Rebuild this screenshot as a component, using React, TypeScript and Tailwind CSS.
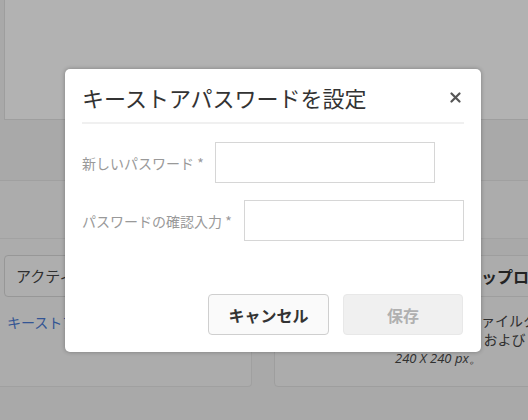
import React from 'react';

const Field = ({ label, labelWidth }: { label: string; labelWidth: string }) => (
  <div className="flex items-center">
    <label className={`${labelWidth} shrink-0 text-[14px] leading-[20px] text-[#999]`}>
      {label} *
    </label>
    <input
      type="password"
      className="w-[220px] h-[41px] border border-[#d6d6d6] bg-white outline-none"
    />
  </div>
);

const KeystoreDialog = () => (
  <div className="absolute left-[65px] top-[69px] w-[416px] h-[283px] bg-white rounded-[5px] shadow-[0_0_4px_rgba(0,0,0,0.3)] px-[17px]">
    <div className="pt-[14px] flex items-center justify-between">
      <h2 className="text-[22px] leading-[28px] font-normal text-[#333]">キーストアパスワードを設定</h2>
      <button className="mr-[3px] w-[12px] h-[12px] flex items-center justify-center text-[#555]">
        <svg width="11" height="11" viewBox="0 0 11 11" fill="none" stroke="currentColor" strokeWidth="2.2" strokeLinecap="round">
          <path d="M1.5 1.5 L9.5 9.5 M9.5 1.5 L1.5 9.5" />
        </svg>
      </button>
    </div>
    <div className="mt-[11px] h-[2px] bg-[#f0f0f0]" />

    <div className="mt-[18px] flex flex-col gap-[17px]">
      <Field label="新しいパスワード" labelWidth="w-[133px]" />
      <Field label="パスワードの確認入力" labelWidth="w-[162px]" />
    </div>

    <div className="mt-[53px] flex justify-end gap-[14px] pr-[1px]">
      <button className="w-[121px] h-[41px] rounded-[4px] border border-[#cfcfcf] bg-[#fafafa] text-[16px] font-bold text-[#333]">
        キャンセル
      </button>
      <button disabled className="w-[120px] h-[41px] rounded-[4px] border border-[#e8e8e8] bg-[#f0f0f0] text-[16px] font-bold text-[#b0b0b0]">
        保存
      </button>
    </div>
  </div>
);

export default function App() {
  return (
    <div className="relative w-[528px] h-[420px] overflow-hidden bg-[#f2f2f2] font-['Noto_Sans_CJK_JP',sans-serif]">
      {/* page behind the dialog */}
      <div className="ml-[4px] h-[120px] bg-white border-l border-b border-[#e2e2e2]" />
      <div className="h-[61px] border-b border-[#e6e6e6]" />
      <div className="h-[58px] bg-[#f6f6f6] border-b border-[#e9e9e9]" />

      <div className="flex gap-[22px]">
        <div className="w-[252px] h-[148px] shrink-0 bg-[#f6f6f6] border-r border-b border-[#e6e6e6] rounded-br-[4px] pt-[16px]">
          <div className="ml-[4px] w-[230px] h-[42px] rounded-[4px] border border-[#d9d9d9] bg-[#fafafa] flex items-center px-[11px] text-[15px] text-[#444]">
            アクティブ
          </div>
          <a className="block mt-[15px] ml-[7px] text-[14px] leading-[20px] text-[#4a7ad4]">キーストアを作成</a>
        </div>

        <div className="mt-[16px] w-[320px] h-[132px] shrink-0 bg-[#f6f6f6] border border-[#e3e3e3] rounded-[4px]">
          <div className="h-[41px] border-b border-[#e3e3e3] flex items-center pl-[142px] text-[16px] font-bold text-[#333] whitespace-nowrap">
            画像のアップロード
          </div>
          <div className="pt-[14px] pl-[164px] text-[14px] leading-[19px] text-[#444] whitespace-nowrap">
            <p>推奨ファイルタイプ：PNG</p>
            <p className="pl-[7px]">JPEG および GIF</p>
          </div>
          <p className="pl-[120px] text-[13px] leading-[18px] italic text-[#444] font-['Open_Sans',sans-serif]">
            240 X 240 px。
          </p>
        </div>
      </div>

      {/* backdrop */}
      <div className="absolute inset-0 bg-black/30" />

      <KeystoreDialog />
    </div>
  );
}
